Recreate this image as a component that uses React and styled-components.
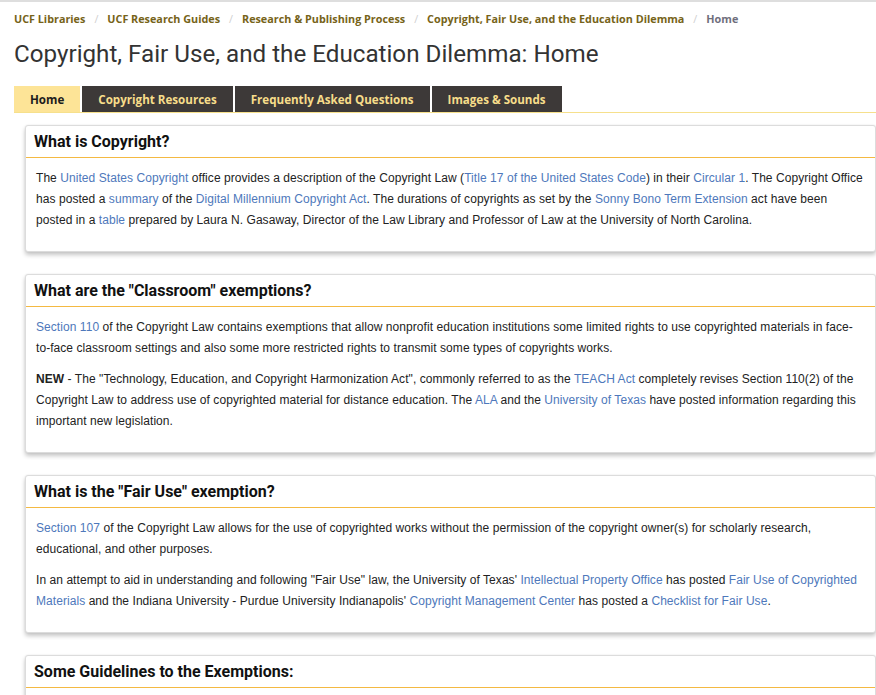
import React from "react";
import styled, { createGlobalStyle } from "styled-components";

const Global = createGlobalStyle`
  html, body { margin: 0; padding: 0; background: #fff; }
  body { width: 876px; overflow: hidden; }
  * { box-sizing: border-box; }
`;

const Page = styled.div`
  border-top: 2px solid #dedede;
  padding: 0 0 40px 0;
`;

const Crumbs = styled.nav`
  display: flex;
  align-items: center;
  padding: 9px 14px 0;
  font-family: "Open Sans", sans-serif;
  font-weight: 700;
  font-size: 10.8px;
  line-height: 16px;
  white-space: nowrap;
`;

const Crumb = styled.a`
  color: ${(p) => (p.$current ? "#6f6f7d" : "#766319")};
  text-decoration: none;
`;

const Sep = styled.span`
  color: #cfcfcf;
  font-weight: 400;
  margin: 0 9px;
`;

const Title = styled.h1`
  margin: 12px 14px 0;
  font-family: Roboto, sans-serif;
  font-weight: 400;
  font-size: 24.2px;
  line-height: 30px;
  color: #333;
`;

const Tabs = styled.ul`
  list-style: none;
  margin: 17px 0 0 14px;
  padding: 0;
  display: flex;
  gap: 2px;
  border-bottom: 1px solid #f6e08c;
`;

const Tab = styled.li`
  height: 26px;
  padding: 0 16px;
  display: flex;
  align-items: center;
  font-family: "Open Sans", sans-serif;
  font-weight: 700;
  font-size: 11.6px;
  background: ${(p) => (p.$active ? "#fde497" : "#3d3938")};
  color: ${(p) => (p.$active ? "#1d1d1d" : "#f7dd8a")};
  white-space: nowrap;
`;

const Panels = styled.div`
  margin: 12px 0 0 25px;
  display: flex;
  flex-direction: column;
  gap: 22px;
`;

const Panel = styled.section`
  border: 1px solid #dcdcdc;
  border-radius: 3px;
  background: #fff;
  box-shadow: 0 3px 4px rgba(0, 0, 0, 0.22), 0 0 2px rgba(0, 0, 0, 0.08);
`;

const PanelHead = styled.h2`
  margin: 0;
  padding: 6px 8px;
  font-family: Roboto, sans-serif;
  font-weight: 700;
  font-size: 16px;
  line-height: 19px;
  color: #111;
  border-bottom: 1px solid #f4b942;
`;

const PanelBody = styled.div`
  padding: 10px 10px 10px 10px;
  font-family: "Liberation Sans", Arial, sans-serif;
  font-size: 12px;
  letter-spacing: 0.06px;
  line-height: 21px;
  color: #222;
`;

const P = styled.p`
  margin: 0 0 10px;
`;

const A = styled.a`
  color: #4e78bb;
  text-decoration: none;
`;

const crumbs = [
  "UCF Libraries",
  "UCF Research Guides",
  "Research & Publishing Process",
  "Copyright, Fair Use, and the Education Dilemma",
];

const tabs = ["Home", "Copyright Resources", "Frequently Asked Questions", "Images & Sounds"];

export default function App() {
  return (
    <>
      <Global />
      <Page>
        <Crumbs>
          {crumbs.map((c) => (
            <React.Fragment key={c}>
              <Crumb href="#">{c}</Crumb>
              <Sep>/</Sep>
            </React.Fragment>
          ))}
          <Crumb $current>Home</Crumb>
        </Crumbs>
        <Title>Copyright, Fair Use, and the Education Dilemma: Home</Title>
        <Tabs>
          {tabs.map((t, i) => (
            <Tab key={t} $active={i === 0}>
              {t}
            </Tab>
          ))}
        </Tabs>
        <Panels>
          <Panel>
            <PanelHead>What is Copyright?</PanelHead>
            <PanelBody>
              <P>
                The <A href="#">United States Copyright</A> office provides a description of the Copyright Law (
                <A href="#">Title 17 of the United States Code</A>) in their <A href="#">Circular 1</A>. The Copyright
                Office has posted a <A href="#">summary</A> of the <A href="#">Digital Millennium Copyright Act</A>. The
                durations of copyrights as set by the <A href="#">Sonny Bono Term Extension</A> act have been posted in
                a <A href="#">table</A> prepared by Laura N. Gasaway, Director of the Law Library and Professor of Law at
                the University of North Carolina.
              </P>
            </PanelBody>
          </Panel>
          <Panel>
            <PanelHead>What are the "Classroom" exemptions?</PanelHead>
            <PanelBody>
              <P>
                <A href="#">Section 110</A> of the Copyright Law contains exemptions that allow nonprofit education
                institutions some limited rights to use copyrighted materials in face-to-face classroom settings and
                also some more restricted rights to transmit some types of copyrights works.
              </P>
              <P>
                <b>NEW</b> - The "Technology, Education, and Copyright Harmonization Act", commonly referred to as the{" "}
                <A href="#">TEACH Act</A> completely revises Section 110(2) of the Copyright Law to address use of
                copyrighted material for distance education. The <A href="#">ALA</A> and the{" "}
                <A href="#">University of Texas</A> have posted information regarding this important new legislation.
              </P>
            </PanelBody>
          </Panel>
          <Panel>
            <PanelHead>What is the "Fair Use" exemption?</PanelHead>
            <PanelBody>
              <P>
                <A href="#">Section 107</A> of the Copyright Law allows for the use of copyrighted works without the
                permission of the copyright owner(s) for scholarly research, educational, and other purposes.
              </P>
              <P>
                In an attempt to aid in understanding and following "Fair Use" law, the University of Texas'{" "}
                <A href="#">Intellectual Property Office</A> has posted <A href="#">Fair Use of Copyrighted Materials</A>{" "}
                and the Indiana University - Purdue University Indianapolis' <A href="#">Copyright Management Center</A>{" "}
                has posted a <A href="#">Checklist for Fair Use</A>.
              </P>
            </PanelBody>
          </Panel>
          <Panel>
            <PanelHead>Some Guidelines to the Exemptions:</PanelHead>
            <PanelBody>
              <P>
                The following guidelines have been developed to help interpret the exemptions of the Copyright Law.
              </P>
            </PanelBody>
          </Panel>
        </Panels>
      </Page>
    </>
  );
}
